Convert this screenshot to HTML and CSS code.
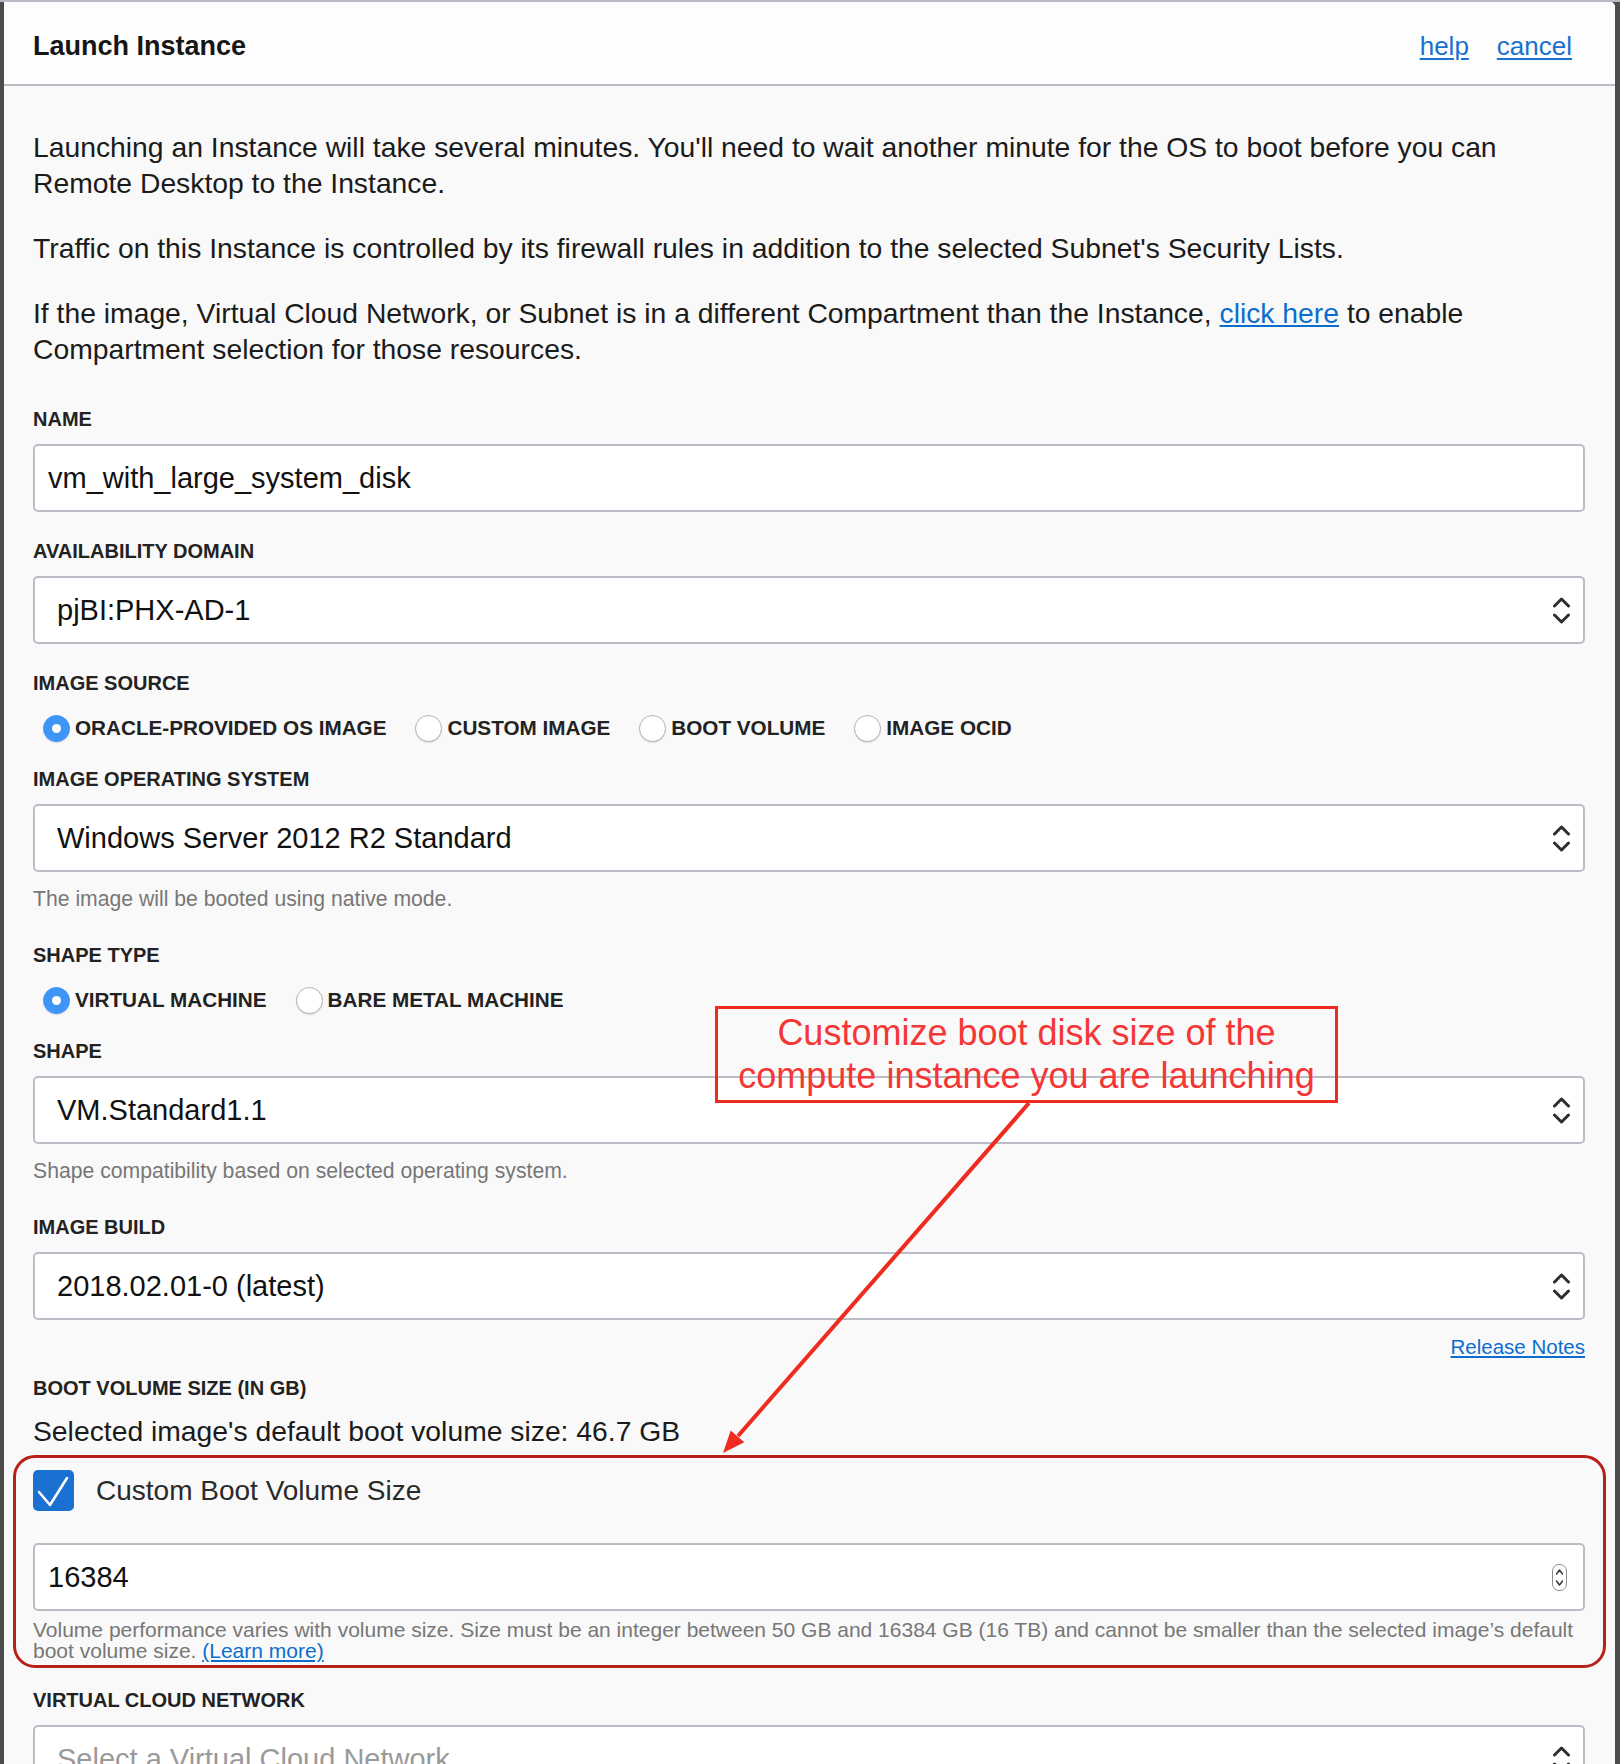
FILE: index.html
```html
<!DOCTYPE html>
<html lang="en">
<head>
<meta charset="utf-8">
<title>Launch Instance</title>
<link rel="stylesheet" href="styles.css">
</head>
<body>
<div class="screen">
  <div class="panel">
    <header class="head">
      <h1 class="title">Launch Instance</h1>
      <nav class="head-links">
        <a href="#" class="link-thin">help</a>
        <a href="#" class="link-thin">cancel</a>
      </nav>
    </header>

    <div class="body">
      <p class="intro">Launching an Instance will take several minutes. You'll need to wait another minute for the OS to boot before you can Remote Desktop to the Instance.</p>
      <p class="intro">Traffic on this Instance is controlled by its firewall rules in addition to the selected Subnet's Security Lists.</p>
      <p class="intro intro-last">If the image, Virtual Cloud Network, or Subnet is in a different Compartment than the Instance, <a href="#" class="link">click here</a> to enable Compartment selection for those resources.</p>

      <div class="field">
        <label class="lbl">NAME</label>
        <div class="control input">vm_with_large_system_disk</div>
      </div>

      <div class="field">
        <label class="lbl">AVAILABILITY DOMAIN</label>
        <div class="control select">
          <span>pjBI:PHX-AD-1</span>
          <svg class="chev" viewBox="0 0 17 27" width="17" height="27"><polyline points="1.5,9 8.5,2 15.5,9"/><polyline points="1.5,18 8.5,25 15.5,18"/></svg>
        </div>
      </div>

      <div class="field radio-field">
        <label class="lbl">IMAGE SOURCE</label>
        <div class="radios">
          <span class="radio"><span class="dot on"></span>ORACLE-PROVIDED OS IMAGE</span>
          <span class="radio"><span class="dot"></span>CUSTOM IMAGE</span>
          <span class="radio"><span class="dot"></span>BOOT VOLUME</span>
          <span class="radio"><span class="dot"></span>IMAGE OCID</span>
        </div>
      </div>

      <div class="field">
        <label class="lbl">IMAGE OPERATING SYSTEM</label>
        <div class="control select">
          <span>Windows Server 2012 R2 Standard</span>
          <svg class="chev" viewBox="0 0 17 27" width="17" height="27"><polyline points="1.5,9 8.5,2 15.5,9"/><polyline points="1.5,18 8.5,25 15.5,18"/></svg>
        </div>
        <div class="hint">The image will be booted using native mode.</div>
      </div>

      <div class="field radio-field">
        <label class="lbl">SHAPE TYPE</label>
        <div class="radios">
          <span class="radio"><span class="dot on"></span>VIRTUAL MACHINE</span>
          <span class="radio"><span class="dot"></span>BARE METAL MACHINE</span>
        </div>
      </div>

      <div class="field">
        <label class="lbl">SHAPE</label>
        <div class="control select">
          <span>VM.Standard1.1</span>
          <svg class="chev" viewBox="0 0 17 27" width="17" height="27"><polyline points="1.5,9 8.5,2 15.5,9"/><polyline points="1.5,18 8.5,25 15.5,18"/></svg>
        </div>
        <div class="hint">Shape compatibility based on selected operating system.</div>
      </div>

      <div class="field build-field">
        <label class="lbl">IMAGE BUILD</label>
        <div class="control select">
          <span>2018.02.01-0 (latest)</span>
          <svg class="chev" viewBox="0 0 17 27" width="17" height="27"><polyline points="1.5,9 8.5,2 15.5,9"/><polyline points="1.5,18 8.5,25 15.5,18"/></svg>
        </div>
        <div class="release"><a href="#" class="link">Release Notes</a></div>
      </div>

      <div class="field">
        <label class="lbl">BOOT VOLUME SIZE (IN GB)</label>
        <div class="default-size">Selected image's default boot volume size: 46.7 GB</div>
        <div class="custom">
          <div class="check-row">
            <span class="checkbox">
              <svg viewBox="0 0 41 41" width="41" height="41"><polyline points="6,22 17,35 34,8"/></svg>
            </span>
            <span class="check-text">Custom Boot Volume Size</span>
          </div>
          <div class="control input number">
            <span>16384</span>
            <span class="spinner">
              <svg viewBox="0 0 13 25" width="13" height="25"><polyline points="3.5,9 6.5,5 9.5,9"/><polyline points="3.5,16 6.5,20 9.5,16"/></svg>
            </span>
          </div>
          <div class="help">Volume performance varies with volume size. Size must be an integer between 50 GB and 16384 GB (16 TB) and cannot be smaller than the selected image’s default boot volume size. <a href="#" class="link">(Learn more)</a></div>
        </div>
      </div>

      <div class="field">
        <label class="lbl">VIRTUAL CLOUD NETWORK</label>
        <div class="control select">
          <span class="placeholder">Select a Virtual Cloud Network</span>
          <svg class="chev" viewBox="0 0 17 27" width="17" height="27"><polyline points="1.5,9 8.5,2 15.5,9"/><polyline points="1.5,18 8.5,25 15.5,18"/></svg>
        </div>
      </div>
    </div>
  </div>

  <div class="annot-box">Customize boot disk size of the<br>compute instance you are launching</div>
  <svg class="annot-arrow" viewBox="0 0 1620 1764" width="1620" height="1764">
    <line x1="1029" y1="1103" x2="738" y2="1436"/>
    <polygon points="723,1453 744.3,1442.3 730.7,1430.5"/>
  </svg>
</div>
</body>
</html>
```

FILE: styles.css
```css
* { box-sizing: border-box; }

html, body {
  margin: 0;
  padding: 0;
}

body {
  background: #4c4c4c;
  font-family: "Liberation Sans", Arial, Helvetica, sans-serif;
  color: #1b1b1b;
}

.screen {
  position: relative;
  height: 1764px;
  overflow: hidden;
  border-top: 2px solid #b7bcc4;
  padding: 0 5px 0 4px;
}

.panel {
  height: 100%;
  background: #f9f9f9;
  border-top-right-radius: 5px;
  overflow: hidden;
}

/* header */
.head {
  display: flex;
  align-items: center;
  justify-content: space-between;
  height: 84px;
  padding: 6px 43px 0 29px;
  background: #fdfdfd;
  border-bottom: 2px solid #b9bec6;
}

.title {
  margin: 0;
  font-size: 27px;
  font-weight: bold;
  color: #161616;
}

.head-links {
  display: flex;
  gap: 28px;
}

.link-thin {
  font-size: 26px;
  color: #1a70cf;
  text-decoration: underline;
  text-underline-offset: 3px;
}

.link {
  color: #0c6dd0;
  text-decoration: underline;
}

/* body */
.body {
  padding: 43px 30px 0 29px;
}

.intro {
  margin: 0 0 29px;
  font-size: 28.3px;
  line-height: 36px;
  color: #1b1b1b;
}

.intro-last {
  margin-bottom: 40px;
}

.field {
  display: flex;
  flex-direction: column;
  margin-bottom: 27px;
}

.lbl {
  display: block;
  margin-bottom: 13px;
  font-size: 20px;
  line-height: 24px;
  font-weight: bold;
  color: #222;
}

.control {
  display: flex;
  align-items: center;
  height: 68px;
  background: #fff;
  border: 2px solid #b9bec6;
  border-radius: 5px;
  font-size: 29px;
  color: #111;
}

.input {
  padding: 0 16px 0 13px;
}

.select {
  justify-content: space-between;
  padding: 0 13px 0 22px;
}

.chev {
  flex: none;
  fill: none;
  stroke: #2e2e2e;
  stroke-width: 3;
  stroke-linecap: round;
  stroke-linejoin: round;
}

.placeholder {
  color: #9a9a9a;
}

.hint {
  margin: 15px 0 5px;
  font-size: 21.2px;
  line-height: 24px;
  color: #777;
}

/* radios */
.radio-field {
  margin-bottom: 24px;
}

.radios {
  display: flex;
  align-items: center;
  height: 30px;
  margin-top: 5px;
  padding-left: 10px;
}

.radio {
  display: flex;
  align-items: center;
  gap: 5px;
  margin-right: 29px;
  font-size: 20.7px;
  font-weight: bold;
  color: #222;
}

.dot {
  position: relative;
  width: 27px;
  height: 27px;
  border-radius: 50%;
  background: #fff;
  border: 1px solid #b3b3b3;
  box-shadow: 0 1px 1px rgba(0,0,0,0.12);
}

.dot.on {
  background: #3d96f7;
  border-color: #3d96f7;
}

.dot.on::after {
  content: "";
  position: absolute;
  left: 8px;
  top: 8px;
  width: 9px;
  height: 9px;
  border-radius: 50%;
  background: #fff;
}

/* image build */
.build-field {
  margin-bottom: 17px;
}

.release {
  margin-top: 15px;
  text-align: right;
  font-size: 20.5px;
  line-height: 24px;
}

/* boot volume */
.default-size {
  margin-bottom: 21px;
  font-size: 28.3px;
  line-height: 36px;
  color: #1b1b1b;
}

.custom {
  position: relative;
}

.custom::before {
  content: "";
  position: absolute;
  left: -20px;
  right: -21px;
  top: -15px;
  bottom: -7px;
  border: 3px solid #b8211a;
  border-radius: 22px;
  pointer-events: none;
}

.check-row {
  display: flex;
  align-items: center;
  gap: 22px;
  height: 41px;
}

.checkbox {
  width: 41px;
  height: 41px;
  border-radius: 5px;
  background: #1a71d2;
}

.checkbox svg {
  display: block;
  fill: none;
  stroke: #fff;
  stroke-width: 2.5;
  stroke-linecap: round;
  stroke-linejoin: round;
}

.check-text {
  font-size: 28px;
  color: #2a2a2a;
}

.number {
  justify-content: space-between;
  margin-top: 32px;
}

.spinner {
  width: 15px;
  height: 27px;
  border: 1px solid #8d8d8d;
  border-radius: 7px;
  background: #fff;
}

.spinner svg {
  display: block;
  fill: none;
  stroke: #333;
  stroke-width: 1.4;
  stroke-linecap: round;
  stroke-linejoin: round;
}

.help {
  margin-top: 8px;
  font-size: 21px;
  line-height: 21px;
  color: #777;
}

/* annotation */
.annot-box {
  position: absolute;
  left: 715px;
  top: 1004px;
  width: 623px;
  height: 97px;
  padding-top: 2px;
  border: 3.5px solid #ef2a1f;
  font-size: 36px;
  line-height: 43px;
  text-align: center;
  color: #f53636;
}

.annot-arrow {
  position: absolute;
  left: 0;
  top: -2px;
  pointer-events: none;
}

.annot-arrow line {
  stroke: #ef2a1f;
  stroke-width: 4;
}

.annot-arrow polygon {
  fill: #ef2a1f;
}
```
